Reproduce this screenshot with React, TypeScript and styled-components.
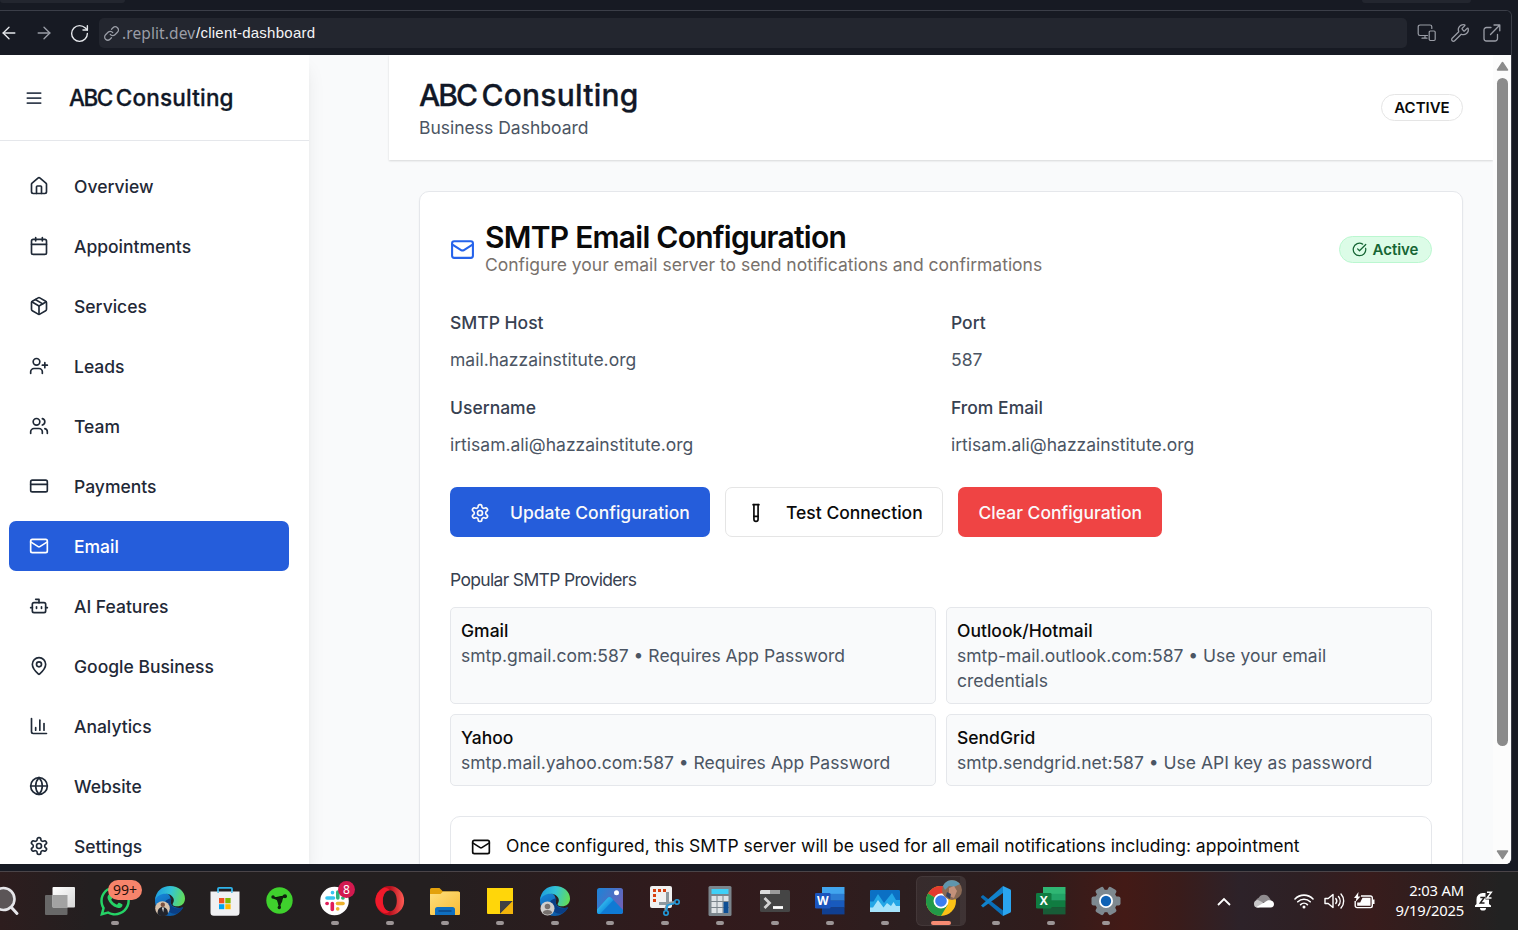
import React from "react";
import styled, { createGlobalStyle, css } from "styled-components";
import {
  ArrowLeft,
  ArrowRight,
  Bot,
  Calendar,
  ChartColumn,
  CircleCheckBig,
  CreditCard,
  Globe,
  House,
  Mail,
  MapPin,
  Package,
  RotateCw,
  TestTube,
  UserPlus,
  Users,
  Wrench,
} from "lucide-react";
import { FaWhatsapp } from "react-icons/fa";

const GlobalStyle = createGlobalStyle`
  * { box-sizing: border-box; }
  body { margin: 0; overflow: hidden; background: #171a23; font-family: Inter, "Liberation Sans", sans-serif; }
  h1, h2, h3, h4, p { margin: 0; font-weight: inherit; }
  button { font: inherit; }
  svg { display: block; flex: none; }
`;

const Screen = styled.div`
  width: 1518px;
  height: 930px;
  display: flex;
  flex-direction: column;
  overflow: hidden;
`;

/* ---------- browser pane ---------- */

const TabStrip = styled.div`
  height: 10px;
  flex: none;
  display: flex;
  justify-content: space-between;
  align-items: flex-start;
  padding-right: 47px;
  background: #171a23;
`;

const TabEdge = styled.div<{ $w: number }>`
  width: ${(p) => p.$w}px;
  height: 3px;
  background: #23262f;
  border-radius: 0 0 4px 4px;
`;

const Pane = styled.div`
  width: 1512px;
  height: 854px;
  flex: none;
  display: flex;
  flex-direction: column;
  border-top: 1px solid #3b3e48;
  border-right: 1px solid #3b3e48;
  border-radius: 0 6px 6px 0;
  overflow: hidden;
`;

const AddressRow = styled.div`
  height: 44px;
  flex: none;
  display: flex;
  align-items: center;
  padding: 0 9px 0 0;
  background: #171a23;
  color: #9a9da6;
`;

const NavIcons = styled.div`
  width: 99px;
  display: flex;
  align-items: center;
  gap: 15px;
  margin-left: -1px;
  margin-right: 1px;
`;

const AddressField = styled.div`
  flex: 1;
  height: 30px;
  display: flex;
  align-items: center;
  padding-left: 5px;
  margin-right: 10px;
  border-radius: 5px;
  background: #23262f;
`;

const Host = styled.span`
  margin-left: 3px;
  width: 74px;
  white-space: nowrap;
  font: 15.5px/20px "Noto Sans", sans-serif;
  letter-spacing: 0.1px;
  color: #9a9da6;
`;

const Path = styled.span`
  font: 15px/20px "Liberation Sans", sans-serif;
  letter-spacing: 0.25px;
  white-space: nowrap;
  color: #f3f4f6;
`;

const ToolIcons = styled.div`
  display: flex;
  align-items: center;
  gap: 12px;
  svg:first-child { margin-right: 1px; }
`;

const Viewport = styled.div`
  flex: 1;
  min-height: 0;
  display: flex;
  background: #f9fafb;
  overflow: hidden;
`;

/* ---------- sidebar ---------- */

const Sidebar = styled.aside`
  width: 309px;
  flex: none;
  background: #fff;
  box-shadow: 0 12px 19px -4px rgba(0, 0, 0, 0.1), 0 5px 8px -5px rgba(0, 0, 0, 0.1);
`;

const SidebarHead = styled.div`
  height: 86px;
  display: flex;
  align-items: center;
  padding-left: 24px;
  gap: 25px;
  border-bottom: 1px solid #e5e7eb;
  color: #374151;
`;

const displayType = css`
  font-weight: 500;
  -webkit-text-stroke: 0.3px currentColor;
  letter-spacing: 0.008em;
  color: #111827;
  white-space: nowrap;
`;

const Brand = styled.h2`
  ${displayType}
  font-size: 22.5px;
  line-height: 30px;
`;

const Initials = styled.span`
  letter-spacing: -0.066em;
  word-spacing: -0.02em;
`;

const NavList = styled.nav`
  display: flex;
  flex-direction: column;
  gap: 10px;
  padding: 20px 20px 0 9px;
`;

const NavItem = styled.a<{ $active?: boolean }>`
  height: 50px;
  display: flex;
  align-items: center;
  gap: 25px;
  padding-left: 20px;
  border-radius: 7px;
  font-size: 17.5px;
  font-weight: 500;
  white-space: nowrap;
  color: ${(p) => (p.$active ? "#fff" : "#1f2937")};
  background: ${(p) => (p.$active ? "#255ddb" : "transparent")};
`;

/* ---------- main ---------- */

const Main = styled.main`
  flex: 1;
  min-width: 0;
  margin-left: 80px;
`;

const PageHead = styled.header`
  height: 105px;
  display: flex;
  align-items: center;
  justify-content: space-between;
  padding: 0 30px;
  background: #fff;
  box-shadow: 0 1px 2px rgba(0, 0, 0, 0.14);
`;

const PageTitle = styled.h1`
  ${displayType}
  font-size: 30px;
  line-height: 40px;
`;

const Muted = styled.p<{ $tone?: string }>`
  font-size: 17.5px;
  line-height: 25px;
  color: ${(p) => p.$tone ?? "#4b5563"};
`;

const pill = css`
  height: 27px;
  display: flex;
  align-items: center;
  border-radius: 14px;
  border: 1px solid #e5e5e5;
  font-size: 15px;
  font-weight: 600;
`;

const StatusPill = styled.div`
  ${pill}
  width: 82px;
  justify-content: center;
  color: #0a0a0a;
`;

const ActivePill = styled.div`
  ${pill}
  gap: 5.5px;
  padding: 0 12.5px 0 12px;
  color: #166534;
  background: #dcfce7;
  border-color: #bbf7d0;
`;

const Card = styled.section`
  margin: 31px 30px 0;
  height: 900px;
  padding: 30px;
  background: #fff;
  border: 1px solid #e5e7eb;
  border-radius: 10px;
  box-shadow: 0 1px 2px rgba(0, 0, 0, 0.05);
`;

const CardHead = styled.div`
  display: flex;
  align-items: center;
  justify-content: space-between;
`;

const CardTitleGroup = styled.div`
  display: flex;
  align-items: center;
  gap: 10px;
  color: #2563eb;
`;

const CardTitle = styled.h3`
  font-size: 30px;
  line-height: 30px;
  font-weight: 600;
  letter-spacing: -0.75px;
  color: #0a0a0a;
  white-space: nowrap;
`;

const FieldGrid = styled.div`
  display: grid;
  grid-template-columns: 1fr 1fr;
  gap: 20px;
  margin-top: 30px;
`;

const FieldLabel = styled.div`
  font-size: 17.5px;
  line-height: 30px;
  font-weight: 500;
  color: #374151;
  padding-top: 1px;
  height: 30px;
  margin-bottom: 10px;
`;

const Actions = styled.div`
  display: flex;
  gap: 15px;
  margin-top: 30px;
`;

const Button = styled.button<{ $kind: "primary" | "outline" | "danger"; $w: number }>`
  width: ${(p) => p.$w}px;
  height: 50px;
  display: flex;
  align-items: center;
  gap: 20px;
  padding: 1px 0 0 ${(p) => (p.$kind === "danger" ? 20.5 : 20)}px;
  border-radius: 7px;
  border: ${(p) => (p.$kind === "outline" ? "1px solid #e5e5e5" : "0")};
  font-size: 17.5px;
  font-weight: 500;
  white-space: nowrap;
  color: ${(p) => (p.$kind === "outline" ? "#0a0a0a" : "#fafafa")};
  background: ${(p) => ({ primary: "#255ddb", outline: "#fff", danger: "#ef4444" })[p.$kind]};
`;

const ProvidersTitle = styled.h4`
  margin-top: 30px;
  font-size: 17.5px;
  line-height: 25px;
  letter-spacing: -0.67px;
  color: #374151;
`;

const ProviderGrid = styled.div`
  display: grid;
  grid-template-columns: 1fr 1fr;
  gap: 10px;
  margin-top: 15px;
`;

const Provider = styled.div`
  padding: 10px;
  border: 1px solid #e5e7eb;
  border-radius: 5px;
  background: #f9fafb;
`;

const ProviderName = styled.div`
  font-size: 17.5px;
  line-height: 25px;
  font-weight: 500;
  color: #0a0a0a;
`;

const Notice = styled.div`
  display: flex;
  gap: 15px;
  margin-top: 30px;
  height: 92px;
  padding: 15px 20px;
  border: 1px solid #e5e7eb;
  border-radius: 10px;
  color: #0a0a0a;
  svg { margin-top: 5px; }
  p { line-height: 27px; }
`;

/* ---------- scrollbar ---------- */

const ScrollTrack = styled.div`
  width: 18px;
  flex: none;
  display: flex;
  flex-direction: column;
  align-items: center;
  padding: 6px 0 4px 1px;
  background: #fcfcfc;
`;

const ScrollThumb = styled.div`
  width: 11px;
  height: 668px;
  margin: 7px 0 auto;
  border-radius: 6px;
  background: #8b8b8b;
`;

/* ---------- taskbar ---------- */

const Taskbar = styled.footer`
  margin-top: 7px;
  height: 59px;
  flex: none;
  display: flex;
  justify-content: space-between;
  border-top: 1px solid #4a4448;
  background: linear-gradient(90deg, #2d1d1e 0, #231f20 90px, #241f20 430px, #321a1c 700px, #301c1d 830px, #2a1f20 940px, #301c1c 1040px, #431a16 1125px, #391c1b 1180px, #2d2229 1240px, #2e2024 1300px, #381c1c 1370px, #2f1e1e 1430px, #222222 1500px);
`;

const Apps = styled.div`
  display: flex;
  margin-left: -22.5px;
`;

const AppCell = styled.div<{ $open?: boolean; $current?: boolean }>`
  position: relative;
  width: ${(p) => (p.$current ? 57 : 55)}px;
  margin-right: ${(p) => (p.$current ? -1 : 0)}px;
  height: 58px;
  display: flex;
  flex-direction: column;
  align-items: center;
  padding-top: 14px;
  &::after {
    content: "";
    margin-top: 5px;
    width: ${(p) => (p.$current ? 20 : 8)}px;
    height: 4px;
    border-radius: 2px;
    background: ${(p) => (p.$current ? "#f7846b" : p.$open ? "#9c9596" : "transparent")};
  }
`;

const MessengerIcon = styled(FaWhatsapp)`
  margin: -2px 0;
`;

const CurrentPlate = styled.div`
  position: absolute;
  left: 3.5px;
  top: 4px;
  width: 50px;
  height: 50px;
  border-radius: 6px;
  background: rgba(255, 255, 255, 0.06);
  border: 1px solid rgba(255, 255, 255, 0.06);
  border-right: 6px solid rgba(255, 255, 255, 0.04);
`;

const CountBadge = styled.div<{ $small?: boolean }>`
  position: absolute;
  left: ${(p) => (p.$small ? 30.5 : 20.5)}px;
  top: ${(p) => (p.$small ? 9 : 8)}px;
  width: ${(p) => (p.$small ? 17 : 34)}px;
  height: ${(p) => (p.$small ? 17 : 20)}px;
  border-radius: 10px;
  display: flex;
  align-items: center;
  justify-content: center;
  font: ${(p) => (p.$small ? 12 : 14)}px/1 "Noto Sans", sans-serif;
  color: ${(p) => (p.$small ? "#fff" : "#26100c")};
  background: ${(p) => (p.$small ? "#d3194f" : "#f7846b")};
`;

const Tray = styled.div`
  display: flex;
  align-items: center;
  padding-right: 24px;
  color: #fff;
`;

const TrayIcon = styled.div<{ $gap: number }>`
  margin-right: ${(p) => p.$gap}px;
`;

const Clock = styled.div`
  width: 89px;
  margin: -2px 11px 0 0;
  text-align: right;
  font: 14.8px/20px "Noto Sans", sans-serif;
  letter-spacing: -0.2px;
  white-space: nowrap;
`;

/* ---------- drawings ---------- */

function GearIcon({ size = 20 }: { size?: number }) {
  return (
    <svg width={size} height={size} viewBox="0 0 24 24" fill="none" stroke="currentColor" strokeWidth="2" strokeLinecap="round" strokeLinejoin="round">
      <path d="M12.22 2h-.44a2 2 0 0 0-2 2v.18a2 2 0 0 1-1 1.73l-.43.25a2 2 0 0 1-2 0l-.15-.08a2 2 0 0 0-2.73.73l-.22.38a2 2 0 0 0 .73 2.73l.15.1a2 2 0 0 1 1 1.72v.51a2 2 0 0 1-1 1.74l-.15.09a2 2 0 0 0-.73 2.73l.22.38a2 2 0 0 0 2.73.73l.15-.08a2 2 0 0 1 2 0l.43.25a2 2 0 0 1 1 1.73V20a2 2 0 0 0 2 2h.44a2 2 0 0 0 2-2v-.18a2 2 0 0 1 1-1.73l.43-.25a2 2 0 0 1 2 0l.15.08a2 2 0 0 0 2.73-.73l.22-.39a2 2 0 0 0-.73-2.73l-.15-.08a2 2 0 0 1-1-1.74v-.5a2 2 0 0 1 1-1.74l.15-.09a2 2 0 0 0 .73-2.73l-.22-.38a2 2 0 0 0-2.73-.73l-.15.08a2 2 0 0 1-2 0l-.43-.25a2 2 0 0 1-1-1.73V4a2 2 0 0 0-2-2z" />
      <circle cx="12" cy="12" r="3" />
    </svg>
  );
}

function MenuIcon() {
  return (
    <svg width="20" height="20" viewBox="0 0 24 24" fill="none" stroke="currentColor" strokeWidth="2.1" strokeLinecap="round">
      <path d="M4 6h16M4 12h16M4 18h16" />
    </svg>
  );
}

function LinkIcon() {
  return (
    <svg width="15" height="15" viewBox="0 0 24 24" fill="none" stroke="currentColor" strokeWidth="2" strokeLinecap="round">
      <path d="M10 13.5a5 5 0 0 0 7.5.5l4-4a5 5 0 0 0-7.1-7.1l-2.4 2.4" />
      <path d="M14 10.5a5 5 0 0 0-7.5-.5l-4 4a5 5 0 0 0 7.1 7.1l2.4-2.4" />
    </svg>
  );
}

function DevicesIcon() {
  return (
    <svg width="20" height="20" viewBox="0 0 20 20" fill="none" stroke="currentColor" strokeWidth="1.2" strokeLinecap="round" strokeLinejoin="round">
      <path d="M10.500 12.500H3A1.800 1.800 0 0 1 1.200 10.700V3.800A1.800 1.800 0 0 1 3 2H13A1.800 1.800 0 0 1 14.800 3.800V5.500M8 12.500v2.700M5 15.200h5" />
      <rect x="12.200" y="8" width="6" height="9.500" rx="1.200" />
    </svg>
  );
}

function PopOutIcon() {
  return (
    <svg width="20" height="20" viewBox="0 0 20 20" fill="none" stroke="currentColor" strokeWidth="1.3" strokeLinecap="round" strokeLinejoin="round">
      <path d="M9 4.500H4.500A2.500 2.500 0 0 0 2 7v8.500A2.500 2.500 0 0 0 4.500 18H13a2.500 2.500 0 0 0 2.500-2.500V11.500M12 2h5.800v5.800M17.600 2.200 8.500 11.500" />
    </svg>
  );
}

function ScrollArrow({ down }: { down?: boolean }) {
  return (
    <svg width="13" height="10" viewBox="0 0 13 10">
      <path d={down ? "M1.500 1h10L6.500 8.500z" : "M1.500 9h10L6.500 1.500z"} fill="#8b8b8b" stroke="#8b8b8b" strokeWidth="1.500" strokeLinejoin="round" />
    </svg>
  );
}

const ArtFrame = styled.svg`
  position: relative;
`;

const Art = ({ children }: { children: React.ReactNode }) => (
  <ArtFrame width="30" height="30" viewBox="0 0 30 30">{children}</ArtFrame>
);

const SearchArt = () => (
  <Art>
    <circle cx="13.500" cy="13" r="11" fill="#5b5557" stroke="#e6e6ea" strokeWidth="2.600" />
    <path d="M21.500 21.500 27 27.500" stroke="#e6e6ea" strokeWidth="3" strokeLinecap="round" />
  </Art>
);

const TaskViewArt = () => (
  <Art>
    <defs>
      <linearGradient id="tv" x1="0" y1="0" x2="1" y2="1"><stop stopColor="#fff" /><stop offset="1" stopColor="#d6d6d6" /></linearGradient>
    </defs>
    <rect x="0" y="9" width="22.500" height="20" rx="1" fill="#686868" />
    <rect x="7.500" y="1" width="22.500" height="20.500" rx="1" fill="url(#tv)" />
    <rect x="7.500" y="9" width="15" height="12.500" fill="#a2a2a2" />
  </Art>
);

const EdgeArt = ({ avatar }: { avatar: "photo" | "person" }) => {
  const id = `edge-${avatar}`;
  return (
    <Art>
      <defs>
        <linearGradient id={`${id}-a`} x1="0" y1=".3" x2="1" y2=".5"><stop stopColor="#1c9be0" /><stop offset=".5" stopColor="#34c4d4" /><stop offset="1" stopColor="#63dd58" /></linearGradient>
        <linearGradient id={`${id}-b`} x1="0" y1="0" x2=".6" y2="1"><stop stopColor="#1788dc" /><stop offset="1" stopColor="#0c59a4" /></linearGradient>
      </defs>
      <path d="M0 15C0 8 6 4.500 12 7.500c4 2 4 6 3.500 9 1 4 6 6.500 12.500 5C25 27 20 30 15 30 6 30 0 23 0 15z" fill={`url(#${id}-b)`} />
      <path d="M10 17c0 7 6 12 12 10.500 3-1.500 5-3.500 6.300-6.500-5 2.500-12 1.500-12.800-4.500 0-2 1-3 1-4-3 0-6.500 1.500-6.500 4.500z" fill="#0a3f86" />
      <path d="M0 14C1 5 7 0 15 0c9 0 15 6 15 12.500 0 5-3.500 7.800-8 7.800-4 0-5-1.500-4-3 2.500-4-.5-8.500-6-9.500C7 7 2 9.500 0 14z" fill={`url(#${id}-a)`} />
      {avatar === "photo" ? (
        <>
          <circle cx="7.500" cy="22.500" r="7.300" fill="#d8c3ae" />
          <path d="M2.500 28c0-5 2-7 5-7s5.500 2 5.500 7a7.300 7.300 0 0 1-10.500 0z" fill="#22242c" />
          <circle cx="7.800" cy="18.800" r="2.200" fill="#7a5140" />
          <path d="M7 21.500h1.800l-.6 5z" fill="#fff" />
        </>
      ) : (
        <>
          <circle cx="7.500" cy="22.500" r="7" fill="#d0cecd" />
          <circle cx="7.500" cy="20.500" r="2.800" fill="#77716e" />
          <path d="M2.800 27c0-2 2-3 4.700-3s4.700 1 4.700 3a7 7 0 0 1-9.400 0z" fill="#77716e" />
        </>
      )}
    </Art>
  );
};

const StoreArt = () => (
  <Art>
    <path d="M8 6V2.800A1 1 0 0 1 9 1.800h12a1 1 0 0 1 1 1V6" fill="none" stroke="#2fb4ea" strokeWidth="1.800" />
    <path d="M.5 5.500h29v21a3.300 3.300 0 0 1-3.300 3.300H3.800A3.300 3.300 0 0 1 .5 26.500z" fill="#f0f0f2" />
    <path d="M7.300 5.500h1.700v1.300H7.300zM21 5.500h1.700v1.300H21z" fill="#2fb4ea" />
    <rect x="9" y="12" width="5.300" height="5.300" fill="#f25022" />
    <rect x="15.300" y="12" width="5.300" height="5.300" fill="#7fba00" />
    <rect x="9" y="18.200" width="5.300" height="5" fill="#00a4ef" />
    <rect x="15.300" y="18.200" width="5.300" height="5" fill="#ffb900" />
  </Art>
);

const HubArt = () => (
  <Art>
    <circle cx="14.500" cy="14.500" r="13.200" fill="#3fd12d" />
    <path d="M8.500 11.500 14.500 14l5-4.500M14.500 14v8" stroke="#10210f" strokeWidth="2" />
    <path d="M11 11.500 14 11l4.500-1L17 16l-2 3.500-1.500-.5z" fill="#10210f" />
    <circle cx="8" cy="11" r="1.700" fill="#10210f" />
    <circle cx="20" cy="10.300" r="2" fill="#10210f" />
    <circle cx="14.300" cy="21.500" r="1.700" fill="#10210f" />
  </Art>
);

const SlackArt = () => (
  <Art>
    <circle cx="14.500" cy="15" r="14.300" fill="#fff" />
    <g strokeWidth="3.600" strokeLinecap="round">
      <path d="M7 12h6.500" stroke="#36c5f0" />
      <path d="M12.500 6.500v.2" stroke="#36c5f0" />
      <path d="M17.800 6v6" stroke="#2eb67d" />
      <path d="M22.800 12h.2" stroke="#2eb67d" />
      <path d="M17.500 17.500h5.500" stroke="#ecb22e" />
      <path d="M17.700 22.800v.2" stroke="#ecb22e" />
      <path d="M12.300 17.500v6" stroke="#e01e5a" />
      <path d="M7 17.500h.2" stroke="#e01e5a" />
    </g>
  </Art>
);

const OperaArt = () => (
  <Art>
    <defs>
      <linearGradient id="op" x1="0" y1="0" x2="1" y2="0"><stop stopColor="#e3121f" /><stop offset=".5" stopColor="#b50e1c" /><stop offset="1" stopColor="#ff5b54" /></linearGradient>
    </defs>
    <path fillRule="evenodd" d="M14.800 0a14.300 14.700 0 1 0 0 29.400 14.300 14.700 0 1 0 0-29.400zm0 4.200c4.200 0 7 4.500 7 10.500s-2.800 10.500-7 10.500-7-4.500-7-10.500 2.800-10.500 7-10.500z" fill="url(#op)" />
    <path d="M14.800 4.200C10.600 4.200 7.800 8.700 7.800 14.700s2.800 10.500 7 10.500c-2 2-5 2.500-7 1C3.500 23.500.5 19.500.5 14.700S4 4 8.500 2c2.500-.5 5 .500 6.300 2.200z" fill="#ef1a2b" />
  </Art>
);

const FolderArt = () => (
  <Art>
    <defs><linearGradient id="fo" x1="0" y1="0" x2="1" y2="1"><stop stopColor="#ffdf7d" /><stop offset="1" stopColor="#f9bb35" /></linearGradient></defs>
    <path d="M0 3.500A1.500 1.500 0 0 1 1.500 2h8l3.500 3.500H28A2 2 0 0 1 30 7v5H0z" fill="#e3a10c" />
    <path d="M0 8h10.500L13 5.500h15.500A1.500 1.500 0 0 1 30 7v21a1 1 0 0 1-1 1H1a1 1 0 0 1-1-1z" fill="url(#fo)" />
    <path d="M5 29v-5.500A2.500 2.500 0 0 1 7.500 21h15a2.500 2.500 0 0 1 2.500 2.500V29z" fill="#0f6fc0" />
    <path d="M8.500 25h13" stroke="#0b3f78" strokeWidth="1.200" />
  </Art>
);

const NotesArt = () => (
  <Art>
    <path d="M2 2h26v26H3a1 1 0 0 1-1-1z" fill="#ffd60a" />
    <path d="M15 15h13L15 28z" fill="#3f4144" />
    <path d="M28 15v13H15z" fill="#f1b40b" />
  </Art>
);

const PhotosArt = () => (
  <Art>
    <defs>
      <linearGradient id="ph" x1="0" y1="0" x2="1" y2=".6"><stop stopColor="#1a84d8" /><stop offset="1" stopColor="#6d62b8" /></linearGradient>
      <linearGradient id="pm" x1="0" y1="0" x2="1" y2="1"><stop stopColor="#58dcf5" /><stop offset=".6" stopColor="#1595e2" /></linearGradient>
    </defs>
    <rect x="2" y="2" width="26" height="26" rx="2.500" fill="url(#ph)" />
    <path d="M2 23.500 12.500 12a2.500 2.500 0 0 1 4 0L28 24v1.500a2.500 2.500 0 0 1-2.500 2.500h-21A2.500 2.500 0 0 1 2 25.500z" fill="#0f7ad4" />
    <path d="M2 23.500 12.500 12a2.500 2.500 0 0 1 4 0l2 2L5 28A2.500 2.500 0 0 1 2 25.500z" fill="url(#pm)" />
    <circle cx="21.500" cy="6.800" r="2.500" fill="#fff" />
  </Art>
);

const SnipArt = () => (
  <Art>
    <rect x="0" y="0" width="22" height="22" rx="2" fill="#f1f1f1" />
    <path d="M3 3h3v3H3zM8 3h3v3H8zM13 3h3v3h-3zM3 8h3v3H3zM3 13h3v3H3z" fill="#d8400f" />
    <path d="M17.500 6v12.500L15.500 24M9 17.500h9.500l6 -1" stroke="#8f999f" strokeWidth="3" fill="none" />
    <circle cx="27" cy="16" r="2.200" fill="none" stroke="#219ddf" strokeWidth="1.600" />
    <circle cx="16" cy="27" r="2.200" fill="none" stroke="#219ddf" strokeWidth="1.600" />
    <path d="m18 19 6-1.700M17.500 18.500 16.500 24" stroke="#219ddf" strokeWidth="1.800" />
  </Art>
);

const CalcArt = () => (
  <Art>
    <rect x="3.500" y="0" width="23" height="30" rx="1.500" fill="#7b858c" />
    <rect x="6.500" y="3" width="17" height="5" fill="#3fd0f7" />
    <g fill="#dfe3e6">
      {[10, 16, 22].map((y) => [6.5, 12.5, 18.5].map((x) => <rect key={`${x}-${y}`} x={x} y={y} width="5" height="5" />))}
    </g>
    <rect x="18.500" y="16" width="5" height="11" fill="#0f4f94" />
  </Art>
);

const TerminalArt = () => (
  <Art>
    <rect x="0" y="4" width="30" height="22" rx="1.500" fill="#454545" />
    <path d="M0 8V5.500A1.500 1.500 0 0 1 1.500 4H10v4z" fill="#dcdcdc" />
    <path d="M10 4h10v4H10z" fill="#9b9b9b" />
    <path d="m4.500 12 5 5-5 5" stroke="#d2d2d2" strokeWidth="2.800" fill="none" />
    <path d="M13 21.500h10" stroke="#fff" strokeWidth="2.800" />
  </Art>
);

const OfficeArt = ({ letter, tones, tile }: { letter: string; tones: string[]; tile: string }) => (
  <Art>
    {tones.map((t, i) => (
      <rect key={t} x="7" y={1 + i * 6.8} width="22.500" height="7" fill={t} />
    ))}
    <rect x="0" y="7" width="15.500" height="15.500" rx="1.300" fill={tile} />
    <text x="7.700" y="19" textAnchor="middle" fontFamily="Open Sans, sans-serif" fontSize="12" fontWeight="700" fill="#fff">{letter}</text>
  </Art>
);

const MonitorArt = () => (
  <Art>
    <rect x="0" y="4" width="30" height="22" rx="1" fill="#0b70c4" />
    <path d="M0 15.500h3.500L8 8l6 9 8-10 4 7h4v12H0z" fill="#23a6e6" />
    <path d="M0 21.500h3L8 14l5.500 7.500L17 17l4 3 2.500-4 2.500 4h4v6H0z" fill="#a5e3fb" />
  </Art>
);

const ChromeArt = () => (
  <Art>
    <circle cx="15" cy="15" r="15" fill="#fbc116" />
    <path d="M15 15 2 7.500A15 15 0 0 1 28 7.500H15z" fill="#e33b2e" />
    <path d="M15 15 2 7.500A15 15 0 0 0 15 30l6.500-11z" fill="#229a48" />
    <circle cx="15" cy="15" r="7.500" fill="#fff" />
    <circle cx="15" cy="15" r="5.800" fill="#3b7df0" />
  </Art>
);

const ProfilePhoto = styled.svg`
  position: absolute;
  left: 29.5px;
  top: 8px;
`;

const CodeArt = () => (
  <Art>
    <path d="M0 10.500 2 9l20 15.500V30L.3 11.700z" fill="#0a6fb8" />
    <path d="M0 19.500 22 0v7L2 21.500z" fill="#1283cc" />
    <path d="m22 0 7 3.300a1.500 1.500 0 0 1 1 1.400v20.600a1.500 1.500 0 0 1-1 1.400L22 30z" fill="#2aa5f0" />
  </Art>
);

const SystemArt = () => (
  <Art>
    <g fill="#7e8990">
      {[0, 60, 120].map((a) => (
        <rect key={a} x="10.500" y="0.500" width="9" height="29" rx="2" transform={`rotate(${a + 30} 15 15)`} />
      ))}
      <circle cx="15" cy="15" r="11.300" />
    </g>
    <circle cx="15" cy="15" r="7" fill="#fff" />
    <circle cx="15" cy="15" r="5.200" fill="#0f62b5" />
  </Art>
);

const navItems = [
  { label: "Overview", Icon: House },
  { label: "Appointments", Icon: Calendar },
  { label: "Services", Icon: Package },
  { label: "Leads", Icon: UserPlus },
  { label: "Team", Icon: Users },
  { label: "Payments", Icon: CreditCard },
  { label: "Email", Icon: Mail },
  { label: "AI Features", Icon: Bot },
  { label: "Google Business", Icon: MapPin },
  { label: "Analytics", Icon: ChartColumn },
  { label: "Website", Icon: Globe },
  { label: "Settings", Icon: GearIcon },
];

const fields = [
  ["SMTP Host", "mail.hazzainstitute.org"],
  ["Port", "587"],
  ["Username", "irtisam.ali@hazzainstitute.org"],
  ["From Email", "irtisam.ali@hazzainstitute.org"],
];

const providers = [
  ["Gmail", "smtp.gmail.com:587 • Requires App Password"],
  ["Outlook/Hotmail", "smtp-mail.outlook.com:587 • Use your email credentials"],
  ["Yahoo", "smtp.mail.yahoo.com:587 • Requires App Password"],
  ["SendGrid", "smtp.sendgrid.net:587 • Use API key as password"],
];

export default function App() {
  return (
    <Screen>
      <GlobalStyle />
      <TabStrip>
        <TabEdge $w={125} />
        <TabEdge $w={109} />
      </TabStrip>
      <Pane>
        <AddressRow>
          <NavIcons>
            <ArrowLeft size={20} strokeWidth={1.6} color="#e5e7eb" />
            <ArrowRight size={20} strokeWidth={1.6} />
            <RotateCw size={21} strokeWidth={1.6} color="#e5e7eb" />
          </NavIcons>
          <AddressField>
            <LinkIcon />
            <Host>.replit.dev</Host>
            <Path>/client-dashboard</Path>
          </AddressField>
          <ToolIcons>
            <DevicesIcon />
            <Wrench size={20} strokeWidth={1.5} />
            <PopOutIcon />
          </ToolIcons>
        </AddressRow>
        <Viewport>
          <Sidebar>
            <SidebarHead>
              <MenuIcon />
              <Brand><Initials>ABC </Initials>Consulting</Brand>
            </SidebarHead>
            <NavList>
              {navItems.map(({ label, Icon }) => (
                <NavItem key={label} $active={label === "Email"}>
                  <Icon size={20} />
                  <span>{label}</span>
                </NavItem>
              ))}
            </NavList>
          </Sidebar>
          <Main>
            <PageHead>
              <div>
                <PageTitle><Initials>ABC </Initials>Consulting</PageTitle>
                <Muted>Business Dashboard</Muted>
              </div>
              <StatusPill>ACTIVE</StatusPill>
            </PageHead>
            <Card>
              <CardHead>
                <CardTitleGroup>
                  <Mail size={25} />
                  <div>
                    <CardTitle>SMTP Email Configuration</CardTitle>
                    <Muted $tone="#78716c">Configure your email server to send notifications and confirmations</Muted>
                  </div>
                </CardTitleGroup>
                <ActivePill>
                  <CircleCheckBig size={15} />
                  Active
                </ActivePill>
              </CardHead>
              <FieldGrid>
                {fields.map(([label, value]) => (
                  <div key={label}>
                    <FieldLabel>{label}</FieldLabel>
                    <Muted>{value}</Muted>
                  </div>
                ))}
              </FieldGrid>
              <Actions>
                <Button $kind="primary" $w={260}>
                  <GearIcon />
                  Update Configuration
                </Button>
                <Button $kind="outline" $w={218}>
                  <TestTube size={20} />
                  Test Connection
                </Button>
                <Button $kind="danger" $w={204}>Clear Configuration</Button>
              </Actions>
              <ProvidersTitle>Popular SMTP Providers</ProvidersTitle>
              <ProviderGrid>
                {providers.map(([name, detail]) => (
                  <Provider key={name}>
                    <ProviderName>{name}</ProviderName>
                    <Muted>{detail}</Muted>
                  </Provider>
                ))}
              </ProviderGrid>
              <Notice>
                <Mail size={20} />
                <Muted $tone="#0a0a0a">
                  Once configured, this SMTP server will be used for all email notifications including: appointment confirmations
                </Muted>
              </Notice>
            </Card>
          </Main>
          <ScrollTrack>
            <ScrollArrow />
            <ScrollThumb />
            <ScrollArrow down />
          </ScrollTrack>
        </Viewport>
      </Pane>
      <Taskbar>
        <Apps>
          <AppCell><SearchArt /></AppCell>
          <AppCell><TaskViewArt /></AppCell>
          <AppCell $open>
            <MessengerIcon size={34} color="#25d366" />
            <CountBadge>99+</CountBadge>
          </AppCell>
          <AppCell><EdgeArt avatar="photo" /></AppCell>
          <AppCell><StoreArt /></AppCell>
          <AppCell><HubArt /></AppCell>
          <AppCell $open>
            <SlackArt />
            <CountBadge $small>8</CountBadge>
          </AppCell>
          <AppCell $open><OperaArt /></AppCell>
          <AppCell $open><FolderArt /></AppCell>
          <AppCell $open><NotesArt /></AppCell>
          <AppCell $open><EdgeArt avatar="person" /></AppCell>
          <AppCell $open><PhotosArt /></AppCell>
          <AppCell $open><SnipArt /></AppCell>
          <AppCell $open><CalcArt /></AppCell>
          <AppCell $open><TerminalArt /></AppCell>
          <AppCell $open><OfficeArt letter="W" tones={["#41a5ee", "#2b7cd3", "#185abd", "#103f91"]} tile="#1b55bd" /></AppCell>
          <AppCell $open><MonitorArt /></AppCell>
          <AppCell $current>
            <CurrentPlate />
            <ChromeArt />
            <ProfilePhoto width="20" height="20" viewBox="0 0 20 20">
              <circle cx="10" cy="10" r="10" fill="#8a6a55" />
              <path d="M1 6a10 10 0 0 1 17-2l-6 3-5-1-4 4z" fill="#5f96ad" />
              <path d="M7 8l5-2 3 5-3 7-5-2z" fill="#c4917a" />
              <path d="M5 12l4 2-1 5-4-3z" fill="#34405c" />
            </ProfilePhoto>
          </AppCell>
          <AppCell $open><CodeArt /></AppCell>
          <AppCell $open><OfficeArt letter="X" tones={["#2fb673", "#21a366", "#107c41", "#185c37"]} tile="#107c41" /></AppCell>
          <AppCell $open><SystemArt /></AppCell>
        </Apps>
        <Tray>
          <TrayIcon $gap={23}>
            <svg width="14" height="9" viewBox="0 0 14 9"><path d="m1 8 6-6 6 6" stroke="#fff" strokeWidth="1.800" fill="none" /></svg>
          </TrayIcon>
          <TrayIcon $gap={20}>
            <svg width="20" height="14" viewBox="0 0 20 14">
              <path d="M2 8.500A4 4 0 0 1 4.500 4 6.200 6.200 0 0 1 15.500 4L18 8z" fill="#8f8b8e" />
              <path d="M0 10a3.800 3.800 0 0 1 4-4l7 3.500-6 4H3.500A3.500 3.500 0 0 1 0 10z" fill="#c9c7c9" />
              <path d="M2 13.200 11 8l3-1.700c4-.7 6 1.500 6 3.800a3.400 3.400 0 0 1-3.300 3.400H3.500z" fill="#fff" />
            </svg>
          </TrayIcon>
          <TrayIcon $gap={10}>
            <svg width="20" height="16" viewBox="0 0 20 16" fill="none" stroke="#fff" strokeWidth="1.600" strokeLinecap="round">
              <path d="M1 6a12.500 12.500 0 0 1 18 0M3.800 8.800a8.700 8.700 0 0 1 12.400 0M6.600 11.600a4.900 4.900 0 0 1 6.800 0" />
              <circle cx="10" cy="14" r="1.500" fill="#fff" stroke="none" />
            </svg>
          </TrayIcon>
          <TrayIcon $gap={9}>
            <svg width="21" height="18" viewBox="0 0 21 18" fill="none" stroke="#fff" strokeWidth="1.400" strokeLinecap="round" strokeLinejoin="round">
              <path d="M1 6.500h3.200L9 2.500v13L4.200 11.500H1zM11.800 6.500a4 4 0 0 1 0 5M14.500 4.500a7 7 0 0 1 0 9M17 2a10.500 10.500 0 0 1 0 14" />
            </svg>
          </TrayIcon>
          <TrayIcon $gap={0}>
            <svg width="21" height="18" viewBox="0 0 21 18">
              <path d="M7 4h9.500a1.800 1.800 0 0 1 1.800 1.800v8a1.800 1.800 0 0 1-1.800 1.800H3a1.800 1.800 0 0 1-1.800-1.800V9" fill="none" stroke="#fff" strokeWidth="1.400" />
              <path d="M8.500 5.800h8v8H3.200v-3.300h3z" fill="#fff" />
              <path d="M19 7.500h1.500V12H19z" fill="#fff" />
              <path d="M4.500 0 0 6h2.500L1.500 10 6.500 4.500H4z" fill="#fff" />
            </svg>
          </TrayIcon>
          <Clock>
            2:03 AM
            <br />
            9/19/2025
          </Clock>
          <svg width="19" height="20" viewBox="0 0 19 20">
            <path d="M0 16v-1.500L1.500 13V8.500A6.300 6.300 0 0 1 8 2h2.500v6.500H14V13l2 1.500V16z" fill="#fff" />
            <path d="M5 17h6a3 2.600 0 0 1-6 0z" fill="#fff" />
            <path d="M5.300 6.500h4L5.300 12h4.200" stroke="#231f1f" strokeWidth="1.500" fill="none" />
            <path d="M12 1.200h4.300L12 7h4.500" stroke="#fff" strokeWidth="1.500" fill="none" />
          </svg>
        </Tray>
      </Taskbar>
    </Screen>
  );
}
